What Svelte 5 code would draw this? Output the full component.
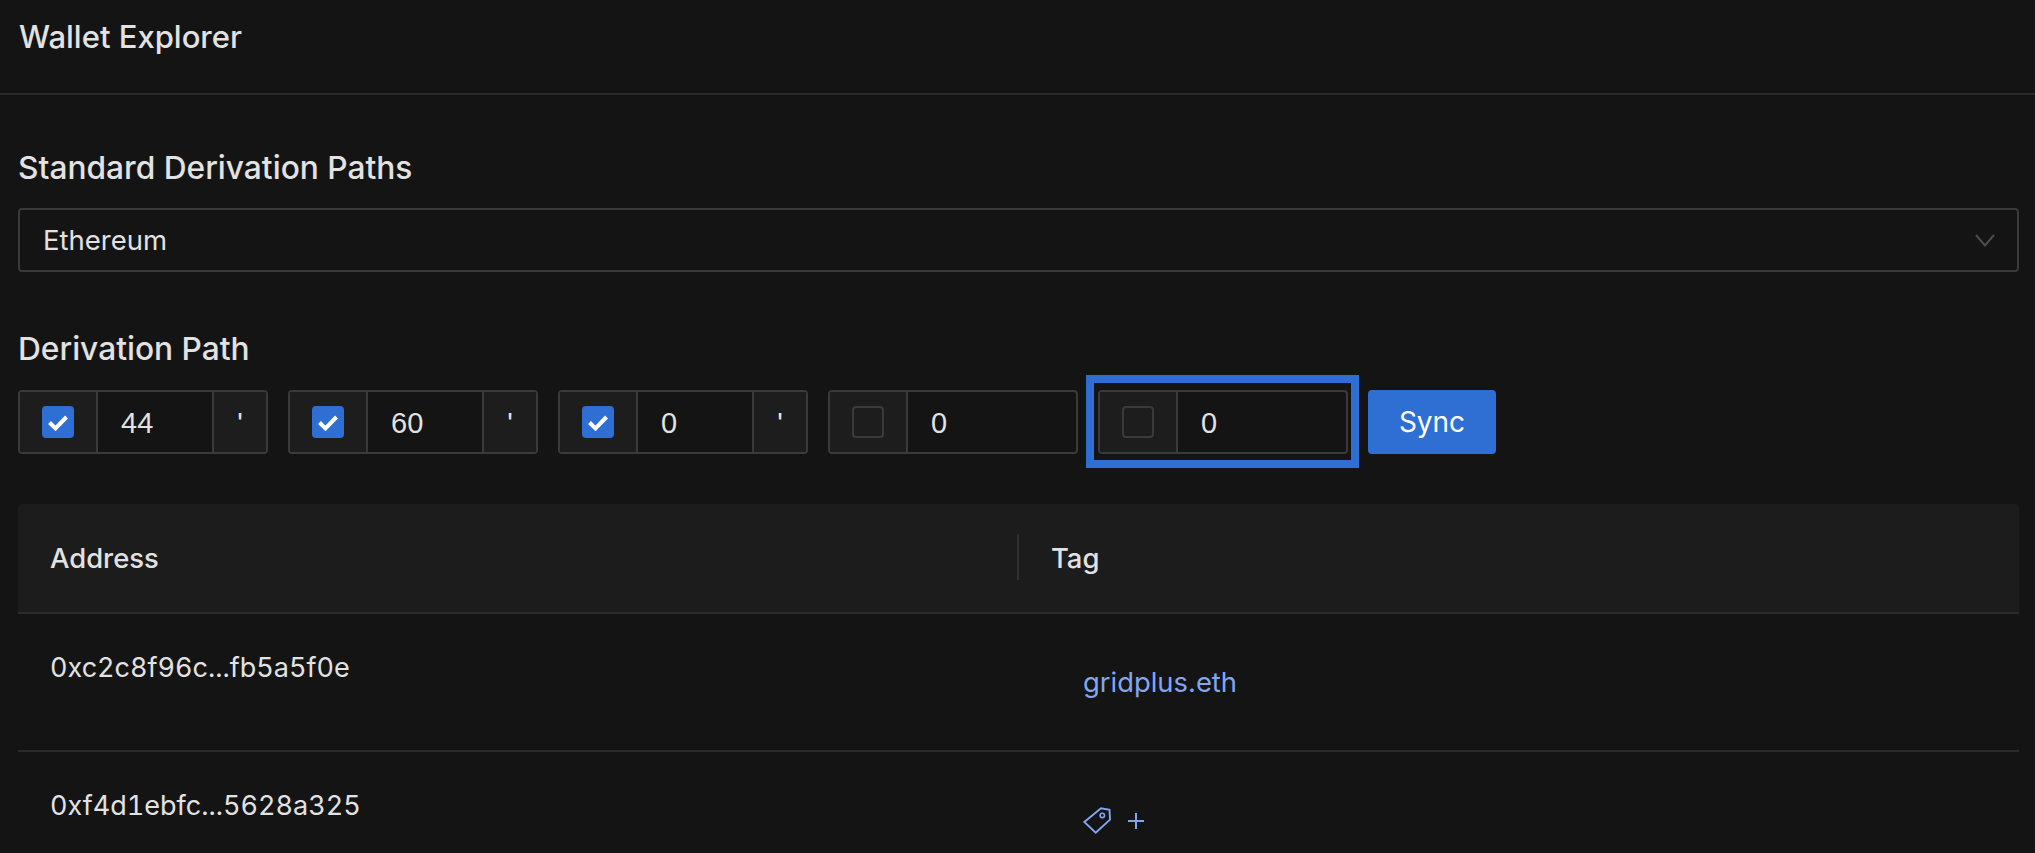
<script>
  const groups = [
    { value: '44', checked: true, hardened: true },
    { value: '60', checked: true, hardened: true },
    { value: '0', checked: true, hardened: true },
    { value: '0', checked: false, hardened: false },
    { value: '0', checked: false, hardened: false, focused: true }
  ];
  const rows = [
    { address: '0xc2c8f96c...fb5a5f0e', tag: 'gridplus.eth' },
    { address: '0xf4d1ebfc...5628a325', tag: null }
  ];
</script>

<div class="page">
  <header class="top"><h1>Wallet Explorer</h1></header>
  <main class="content">
    <h2 class="first">Standard Derivation Paths</h2>
    <div class="select">
      <span>Ethereum</span>
      <svg width="20" height="13" viewBox="0 0 20 13" fill="none"><path d="M1 1l9 10.5L19 1" stroke="#4d4d4d" stroke-width="2"/></svg>
    </div>
    <h2 class="second">Derivation Path</h2>
    <div class="paths">
      {#each groups as g}
        <div class="group" class:focused={g.focused}>
          <div class="addon check">
            <span class="box" class:on={g.checked}>
              {#if g.checked}
                <svg width="32" height="32" viewBox="0 0 32 32" fill="none"><path d="M7.5 16.5l6 6L24.5 11" stroke="#fff" stroke-width="4"/></svg>
              {/if}
            </span>
          </div>
          <div class="value">{g.value}</div>
          {#if g.hardened}<div class="addon tick">'</div>{/if}
        </div>
      {/each}
      <button class="sync">Sync</button>
    </div>
    <div class="table">
      <div class="row head">
        <div class="cell">Address</div>
        <div class="cell tagcol">Tag</div>
      </div>
      {#each rows as r}
        <div class="row body">
          <div class="cell addr">{r.address}</div>
          <div class="cell tagcell">
            {#if r.tag}
              <span class="link">{r.tag}</span>
            {:else}
              <span class="add">
                <svg width="28" height="27" viewBox="0 0 28 27" fill="none"><path d="M1.3 15L18 1.2l8.5 1.5.5 10L12.7 25.7z" stroke="#82a6f2" stroke-width="1.9"/><circle cx="19.3" cy="8.4" r="2.2" stroke="#82a6f2" stroke-width="1.6"/></svg>
                <svg width="16" height="16" viewBox="0 0 16 16" fill="none"><path d="M8 0v16M0 8h16" stroke="#82a6f2" stroke-width="2"/></svg>
              </span>
            {/if}
          </div>
        </div>
      {/each}
    </div>
  </main>
</div>

<style>
  :global(body) { margin: 0; background: #141414; overflow: hidden; }
  .page { height: 853px; overflow: hidden; background: #141414; color: #e2e2e2; font-family: Inter, "Liberation Sans", sans-serif; }
  .top { height: 93px; border-bottom: 2px solid #2b2b2b; padding-left: 19px; }
  h1 { margin: 0; padding-top: 19px; font-size: 31px; line-height: 36px; font-weight: 500; }
  .content { padding: 0 16px 0 18px; }
  h2 { margin: 0; font-size: 31.7px; line-height: 36px; font-weight: 500; }
  .first { padding-top: 55px; margin-bottom: 22px; }
  .select { height: 64px; box-sizing: border-box; border: 2px solid #3a3a3a; border-radius: 4px; display: flex; align-items: center; justify-content: space-between; padding: 0 22px 0 23px; font-size: 27.5px; }
  .second { margin-top: 59px; margin-bottom: 23px; }
  .paths { display: flex; gap: 20px; }
  .group { position: relative; width: 250px; height: 64px; box-sizing: border-box; border: 2px solid #3a3a3a; border-radius: 4px; display: flex; font-size: 29px; }
  .group.focused::after { content: ""; position: absolute; top: -17px; left: -14px; right: -13px; bottom: -16px; border: 8px solid #2f6fd3; pointer-events: none; }
  .addon { background: #1d1d1d; display: flex; }
  .check { width: 78px; flex: none; border-right: 2px solid #3a3a3a; align-items: center; padding-left: 22px; box-sizing: border-box; }
  .box { width: 32px; height: 32px; box-sizing: border-box; border: 2px solid #3a3a3a; border-radius: 4px; display: block; }
  .box.on { background: #2f6fd3; border: 0; }
  .box svg { display: block; }
  .value { flex: 1; padding-left: 23px; line-height: 62px; font-family: "Liberation Sans", sans-serif; }
  .tick { width: 52px; flex: none; border-left: 2px solid #3a3a3a; justify-content: center; line-height: 62px; font-size: 29px; font-family: "Liberation Sans", sans-serif; }
  .sync { width: 128px; height: 64px; border: 0; border-radius: 4px; background: #2f6fd3; color: #fff; font: 400 28px Inter, sans-serif; padding: 0; }
  .table { margin-top: 50px; }
  .row { display: grid; grid-template-columns: 999px 1fr; border-bottom: 2px solid #2b2b2b; box-sizing: border-box; }
  .head { height: 110px; background: #1c1c1c; font-weight: 500; font-size: 27.4px; border-radius: 4px 4px 0 0; align-items: center; }
  .head .cell { padding-left: 32px; line-height: 36px; }
  .head .tagcol { position: relative; padding-left: 34px; }
  .head .tagcol::before { content: ""; position: absolute; left: 0; top: -6px; height: 46px; width: 2px; background: #303030; }
  .body { height: 138px; font-size: 27.4px; }
  .addr { padding: 36px 0 0 32px; line-height: 36px; font-size: 27px; font-variant-numeric: tabular-nums; }
  .tagcell { padding: 50px 0 0 66px; line-height: 36px; }
  .link { color: #82a6f2; }
  .add { display: flex; align-items: center; gap: 17px; margin-top: 5px; }
  .add svg { display: block; }
</style>
